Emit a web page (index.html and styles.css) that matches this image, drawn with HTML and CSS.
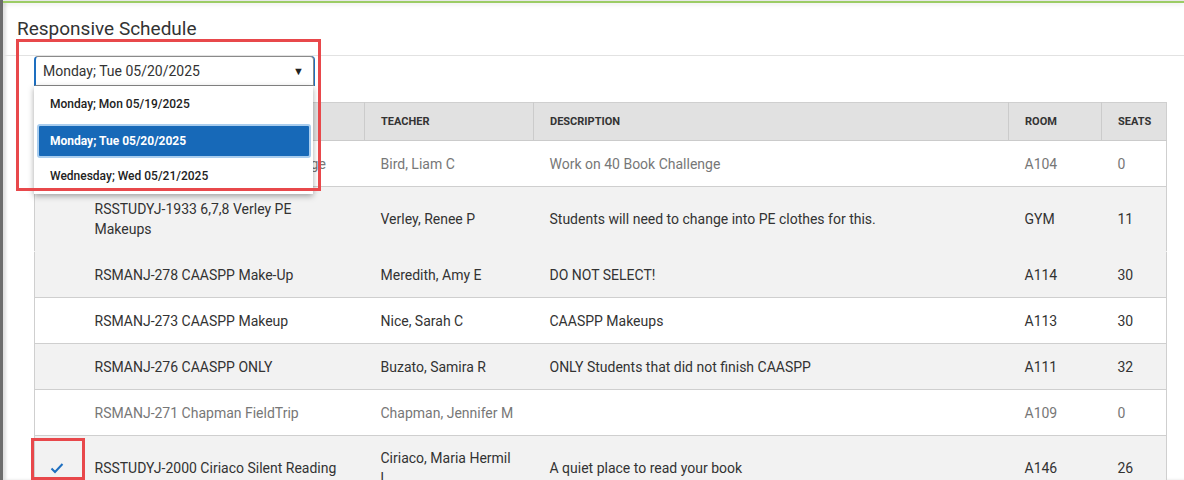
FILE: index.html
```html
<!DOCTYPE html>
<html>
<head>
	<title>Responsive Schedule</title>
	<link rel="stylesheet" href="styles.css">
</head>
<body>
<div class="frame">
	<div class="topline"></div>
	<div class="page-head">
		<h1 class="title">Responsive Schedule</h1>
	</div>
	<div class="content">
		<div class="picker">
			<div class="select">
				<span>Monday; Tue 05/20/2025</span>
				<span class="caret">&#9660;</span>
			</div>
			<ul class="options">
				<li>Monday; Mon 05/19/2025</li>
				<li class="active">Monday; Tue 05/20/2025</li>
				<li>Wednesday; Wed 05/21/2025</li>
			</ul>
			<div class="mark mark-picker"></div>
		</div>

		<table class="grid">
			<colgroup>
				<col style="width:44px">
				<col style="width:286px">
				<col style="width:169px">
				<col style="width:475px">
				<col style="width:93px">
				<col>
			</colgroup>
			<thead>
				<tr>
					<th></th>
					<th>Course</th>
					<th>Teacher</th>
					<th>Description</th>
					<th>Room</th>
					<th>Seats</th>
				</tr>
			</thead>
			<tbody>
				<tr class="off">
					<td></td>
					<td>RSMANJ-270 Bird 40 Book Challenge</td>
					<td>Bird, Liam C</td>
					<td>Work on 40 Book Challenge</td>
					<td>A104</td>
					<td>0</td>
				</tr>
				<tr class="alt joined">
					<td></td>
					<td>RSSTUDYJ-1933 6,7,8 Verley PE Makeups</td>
					<td>Verley, Renee P</td>
					<td>Students will need to change into PE clothes for this.</td>
					<td>GYM</td>
					<td>11</td>
				</tr>
				<tr class="alt">
					<td></td>
					<td>RSMANJ-278 CAASPP Make-Up</td>
					<td>Meredith, Amy E</td>
					<td>DO NOT SELECT!</td>
					<td>A114</td>
					<td>30</td>
				</tr>
				<tr>
					<td></td>
					<td>RSMANJ-273 CAASPP Makeup</td>
					<td>Nice, Sarah C</td>
					<td>CAASPP Makeups</td>
					<td>A113</td>
					<td>30</td>
				</tr>
				<tr class="alt">
					<td></td>
					<td>RSMANJ-276 CAASPP ONLY</td>
					<td>Buzato, Samira R</td>
					<td>ONLY Students that did not finish CAASPP</td>
					<td>A111</td>
					<td>32</td>
				</tr>
				<tr class="off">
					<td></td>
					<td>RSMANJ-271 Chapman FieldTrip</td>
					<td>Chapman, Jennifer M</td>
					<td></td>
					<td>A109</td>
					<td>0</td>
				</tr>
				<tr class="alt">
					<td class="check-cell">
						<svg class="check" width="14" height="12" viewBox="0 0 14 12">
							<path d="M1.5 6.5 L5 10 L12.5 2" fill="none" stroke="#1e6fc0" stroke-width="2"/>
						</svg>
						<div class="mark mark-check"></div>
					</td>
					<td>RSSTUDYJ-2000 Ciriaco Silent Reading</td>
					<td>Ciriaco, Maria Hermil<br>l</td>
					<td>A quiet place to read your book</td>
					<td>A146</td>
					<td>26</td>
				</tr>
			</tbody>
		</table>
	</div>
</div>
</body>
</html>
```

FILE: styles.css
```css
*{
	box-sizing: border-box;
}
body{
	margin: 0;
	font-family: Roboto, "Liberation Sans", sans-serif;
	color: #333;
	background: #fff;
	overflow: hidden;
}
.frame{
	height: 480px;
	border-left: 3px solid #6d6d6d;
	box-shadow: inset 3px 0 3px rgba(0,0,0,0.12);
}
.topline{
	height: 3px;
	background: #9ccc65;
	border-top: 1px solid #e8e8e8;
	box-shadow: 0 2px 4px rgba(0,0,0,0.08);
}
.page-head{
	padding: 14px 0 14px 14px;
	border-bottom: 1px solid #e2e2e2;
}
.title{
	margin: 0;
	font-size: 19px;
	line-height: 24px;
	font-weight: 400;
	color: #333;
}
.content{
	padding-left: 31px;
}
.picker{
	position: relative;
	height: 46px;
}
.select{
	width: 280px;
	height: 30px;
	display: flex;
	align-items: center;
	justify-content: space-between;
	padding: 0 9px 0 7px;
	border: 1px solid #8a8a8a;
	border-left: 2px solid #1e6fc0;
	border-radius: 4px 4px 0 0;
	box-shadow: 1px 0 0 #1e6fc0;
	font-size: 14px;
	background: #fff;
}
.caret{
	font-size: 11px;
	color: #222;
}
.options{
	position: absolute;
	top: 30px;
	left: 0;
	width: 279px;
	margin: 0;
	padding: 0 2px 0 3px;
	list-style: none;
	background: #fff;
	box-shadow: 0 2px 6px rgba(0,0,0,0.35);
	z-index: 5;
}
.options li{
	height: 36px;
	line-height: 37px;
	padding-left: 13px;
	font-size: 12px;
	font-weight: 500;
	color: #222;
}
.options li.active{
	height: 34px;
	line-height: 30px;
	margin: 2px 0 1px 0;
	padding-left: 11px;
	background: #1769b8;
	border: 2px solid #a9cdee;
	border-radius: 3px;
	color: #fff;
	font-weight: 700;
}
.options li:last-child{
	height: 35px;
	line-height: 34px;
}
.mark{
	position: absolute;
	border: 3px solid #e8484b;
	z-index: 6;
}
.mark-picker{
	left: -18px;
	top: -17px;
	width: 305px;
	height: 152px;
}
.grid{
	width: 1133px;
	table-layout: fixed;
	border-collapse: collapse;
	border: 1px solid #cfcfcf;
	font-size: 14px;
}
.grid th{
	height: 38px;
	padding: 0 16px;
	background: #e1e1e1;
	text-align: left;
	font-size: 11px;
	font-weight: 700;
	text-transform: uppercase;
	color: #333;
	border-right: 1px solid #cbcbcb;
	border-bottom: 1px solid #cbcbcb;
}
.grid th:last-child{
	border-right: none;
}
.grid td{
	height: 46px;
	padding: 12px 16px;
	line-height: 20px;
	border-bottom: 1px solid #cfcfcf;
	vertical-align: middle;
}
.grid tr.joined td{
	border-bottom-color: #f2f2f2;
}
.grid tr.alt td{
	background: #f2f2f2;
}
.grid tr.off td{
	color: #777;
}
.check-cell{
	position: relative;
	text-align: center;
	padding: 0 !important;
}
.check{
	display: block;
	margin: 0 auto;
}
.mark-check{
	left: -4px;
	top: 2px;
	width: 54px;
	height: 42px;
}
```
